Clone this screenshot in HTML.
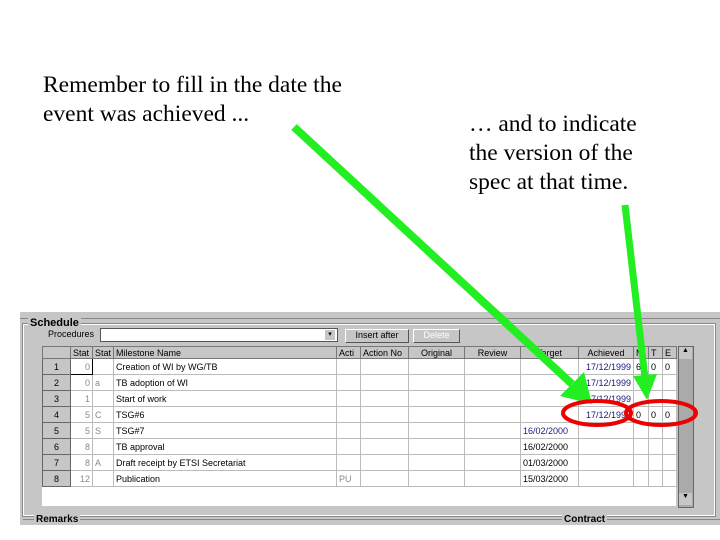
<!DOCTYPE html>
<html><head><style>
body{margin:0;width:720px;height:540px;background:#fff;position:relative;overflow:hidden;font-family:"Liberation Sans",sans-serif}
.t{position:absolute;font-family:"Liberation Serif",serif;font-size:23.5px;line-height:29px;color:#000;white-space:nowrap}
.g{position:absolute;left:20px;top:312px;width:700px;height:213px;background:#c6c6c6}
.a{position:absolute;font-size:9px;color:#000;white-space:nowrap}
table{position:absolute;left:42px;top:346px;border-collapse:collapse;font-size:9px;table-layout:fixed}
td{border:1px solid #bbb;height:15px;padding:0 2px;white-space:nowrap;overflow:hidden;background:#fff}
th{font-weight:normal;background:#c6c6c6;border:1px solid #777;height:11px;padding:0 2px;text-align:left;white-space:nowrap;overflow:hidden}
td.h{background:#c6c6c6;border:1px solid #666;text-align:center}
.r{text-align:right;color:#888}.b{color:#1a1a80}
</style></head><body>
<div class="t" style="left:43px;top:71px">Remember to fill in the date the<br>event was achieved ...</div>
<div class="t" style="left:469px;top:110px">… and to indicate<br>the version of the<br>spec at that time.</div>
<div class="g"></div>
<div style="position:absolute;left:20px;top:312px;width:700px;height:6px;border-bottom:1px solid #888"></div>
<div style="position:absolute;left:23px;top:324px;width:690px;height:190px;border:1px solid #fff;outline:1px solid #888"></div>
<div class="a" style="left:28px;top:317px;font-size:11px;font-weight:bold;background:#c6c6c6;padding:0 2px">Schedule</div>
<div class="a" style="left:48px;top:329px">Procedures</div>
<div style="position:absolute;left:100px;top:328px;width:236px;height:12px;background:#fff;border:1px solid #555"></div>
<div style="position:absolute;left:325px;top:330px;width:10px;height:10px;background:#c6c6c6;font-size:7px;text-align:center">▾</div>
<div class="a" style="left:345px;top:329px;width:62px;height:12px;border:1px solid #555;border-top-color:#fff;border-left-color:#fff;text-align:center">Insert after</div>
<div class="a" style="left:413px;top:329px;width:45px;height:12px;border:1px solid #555;border-top-color:#fff;border-left-color:#fff;text-align:center;color:#fff">Delete</div>
<div style="position:absolute;left:42px;top:346px;width:634px;height:160px;background:#fff"></div>
<table>
<colgroup><col style="width:28px"><col style="width:22px"><col style="width:21px"><col style="width:223px"><col style="width:24px"><col style="width:48px"><col style="width:56px"><col style="width:56px"><col style="width:58px"><col style="width:55px"><col style="width:15px"><col style="width:14px"><col style="width:14px"></colgroup>
<tr><th></th><th>Stat</th><th>Stat</th><th>Milestone Name</th><th>Acti</th><th>Action No</th><th style="text-align:center">Original</th><th style="text-align:center">Review</th><th style="text-align:center">Target</th><th style="text-align:center">Achieved</th><th>M</th><th>T</th><th>E</th></tr>
<tr><td class="h">1</td><td class="r" style="border:1px solid #000">0</td><td></td><td>Creation of WI by WG/TB</td><td></td><td></td><td></td><td></td><td></td><td class="b r" style="color:#1a1a80">17/12/1999</td><td>6</td><td>0</td><td>0</td></tr>
<tr><td class="h">2</td><td class="r">0</td><td style="color:#888">a</td><td>TB adoption of WI</td><td></td><td></td><td></td><td></td><td></td><td class="r" style="color:#1a1a80">17/12/1999</td><td></td><td></td><td></td></tr>
<tr><td class="h">3</td><td class="r">1</td><td></td><td>Start of work</td><td></td><td></td><td></td><td></td><td></td><td class="r" style="color:#1a1a80">17/12/1999</td><td></td><td></td><td></td></tr>
<tr><td class="h">4</td><td class="r">5</td><td style="color:#888">C</td><td>TSG#6</td><td></td><td></td><td></td><td></td><td></td><td class="r" style="color:#1a1a80">17/12/1999</td><td>0</td><td>0</td><td>0</td></tr>
<tr><td class="h">5</td><td class="r">5</td><td style="color:#888">S</td><td>TSG#7</td><td></td><td></td><td></td><td></td><td class="b">16/02/2000</td><td></td><td></td><td></td><td></td></tr>
<tr><td class="h">6</td><td class="r">8</td><td></td><td>TB approval</td><td></td><td></td><td></td><td></td><td>16/02/2000</td><td></td><td></td><td></td><td></td></tr>
<tr><td class="h">7</td><td class="r">8</td><td style="color:#888">A</td><td>Draft receipt by ETSI Secretariat</td><td></td><td></td><td></td><td></td><td>01/03/2000</td><td></td><td></td><td></td><td></td></tr>
<tr><td class="h">8</td><td class="r">12</td><td></td><td>Publication</td><td style="color:#888">PU</td><td></td><td></td><td></td><td>15/03/2000</td><td></td><td></td><td></td><td></td></tr>
</table>
<div style="position:absolute;left:678px;top:346px;width:14px;height:160px;background:#aaa;border:1px solid #666"></div>
<div class="a" style="left:679px;top:347px;width:13px;height:12px;background:#c6c6c6;text-align:center;font-size:7px">▲</div>
<div class="a" style="left:679px;top:493px;width:13px;height:12px;background:#c6c6c6;text-align:center;font-size:7px">▼</div>
<div style="position:absolute;left:23px;top:519px;width:697px;border-top:1px solid #888"></div>
<div class="a" style="left:34px;top:514px;font-size:10px;font-weight:bold;background:#c6c6c6;padding:0 2px">Remarks</div>
<div class="a" style="left:562px;top:514px;font-size:10px;font-weight:bold;background:#c6c6c6;padding:0 2px">Contract</div>
<svg style="position:absolute;left:0;top:0" width="720" height="540">
<line x1="294" y1="127" x2="572" y2="384" stroke="#22ee22" stroke-width="8"/>
<polygon points="560,396 592,404 584,372" fill="#22ee22"/>
<line x1="625" y1="205" x2="645" y2="378" stroke="#22ee22" stroke-width="7"/>
<polygon points="633,376 657,374 647,400" fill="#22ee22"/>
<ellipse cx="597" cy="413" rx="34" ry="12" fill="none" stroke="#e00" stroke-width="4"/>
<ellipse cx="661" cy="413" rx="35" ry="12" fill="none" stroke="#e00" stroke-width="4"/>
</svg>
</body></html>
